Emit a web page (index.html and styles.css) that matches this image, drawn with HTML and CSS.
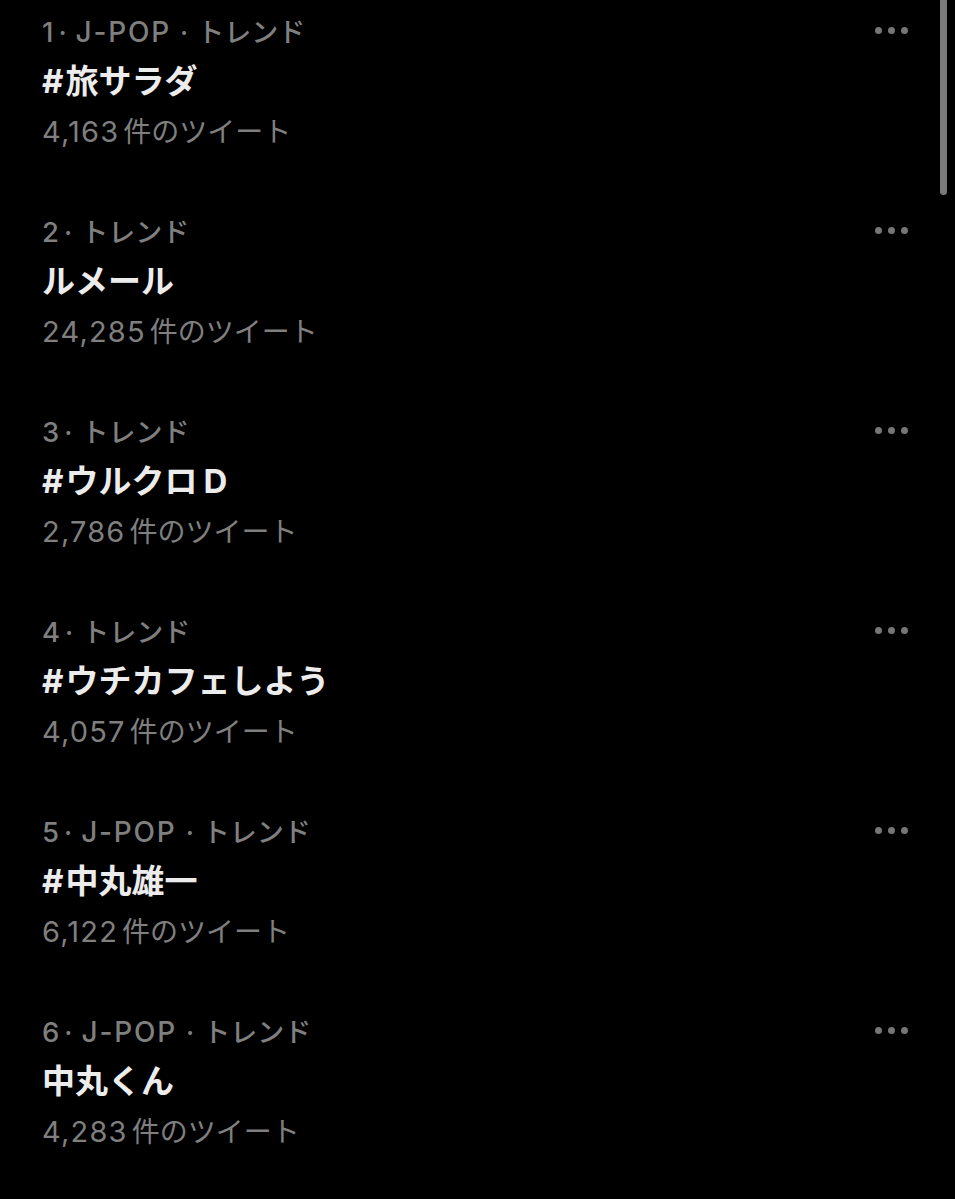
FILE: index.html
```html
<!DOCTYPE html>
<html lang="ja">
<head>
<meta charset="utf-8">
<link rel="stylesheet" href="styles.css">
</head>
<body>
<div class="page">
  <ul class="list">
    <li class="trend">
      <div class="text">
        <div class="meta"><span class="rank">1</span><span class="sep">·</span><span class="cat">J-POP</span><span class="sep">·</span><span>トレンド</span></div>
        <div class="title"><span class="hash">#</span>旅サラダ</div>
        <div class="count"><span class="num">4,163</span>件のツイート</div>
      </div>
      <div class="more"><span></span><span></span><span></span></div>
    </li>
    <li class="trend">
      <div class="text">
        <div class="meta"><span class="rank">2</span><span class="sep">·</span><span>トレンド</span></div>
        <div class="title">ルメール</div>
        <div class="count"><span class="num">24,285</span>件のツイート</div>
      </div>
      <div class="more"><span></span><span></span><span></span></div>
    </li>
    <li class="trend">
      <div class="text">
        <div class="meta"><span class="rank">3</span><span class="sep">·</span><span>トレンド</span></div>
        <div class="title"><span class="hash">#</span>ウルクロ<span class="lat">D</span></div>
        <div class="count"><span class="num">2,786</span>件のツイート</div>
      </div>
      <div class="more"><span></span><span></span><span></span></div>
    </li>
    <li class="trend">
      <div class="text">
        <div class="meta"><span class="rank">4</span><span class="sep">·</span><span>トレンド</span></div>
        <div class="title"><span class="hash">#</span>ウチカフェしよう</div>
        <div class="count"><span class="num">4,057</span>件のツイート</div>
      </div>
      <div class="more"><span></span><span></span><span></span></div>
    </li>
    <li class="trend">
      <div class="text">
        <div class="meta"><span class="rank">5</span><span class="sep">·</span><span class="cat">J-POP</span><span class="sep">·</span><span>トレンド</span></div>
        <div class="title"><span class="hash">#</span>中丸雄一</div>
        <div class="count"><span class="num">6,122</span>件のツイート</div>
      </div>
      <div class="more"><span></span><span></span><span></span></div>
    </li>
    <li class="trend">
      <div class="text">
        <div class="meta"><span class="rank">6</span><span class="sep">·</span><span class="cat">J-POP</span><span class="sep">·</span><span>トレンド</span></div>
        <div class="title">中丸くん</div>
        <div class="count"><span class="num">4,283</span>件のツイート</div>
      </div>
      <div class="more"><span></span><span></span><span></span></div>
    </li>
  </ul>
  <div class="scrollbar"></div>
</div>
</body>
</html>
```

FILE: styles.css
```css
html, body {
  margin: 0;
  padding: 0;
  background: #000;
}
body {
  font-family: Inter, "Noto Sans CJK JP", sans-serif;
  width: 955px;
  height: 1199px;
  overflow: hidden;
}
.page {
  position: relative;
  height: 1199px;
}
.list {
  list-style: none;
  margin: 0;
  padding: 0;
}
.trend {
  display: flex;
  justify-content: space-between;
  align-items: flex-start;
  height: 200px;
  padding: 14px 47px 0 42px;
  box-sizing: border-box;
}
.text {
  display: flex;
  flex-direction: column;
}
.meta {
  display: flex;
  align-items: baseline;
  color: #7f7f7f;
  font-size: 27px;
  line-height: 36px;
  font-weight: 500;
}
.meta .rank {
  font-size: 27.5px;
}
.meta .sep {
  margin: 0 9px 0 5px;
}
.meta .cat {
  font-size: 28px;
  letter-spacing: 1.8px;
  margin-right: 4px;
}
.title {
  color: #ececec;
  font-size: 33px;
  line-height: 48px;
  font-weight: 700;
  margin-top: 6px;
}
.title .hash {
  margin-right: 2px;
}
.title .lat {
  margin-left: 6px;
  letter-spacing: 1px;
}
.count {
  color: #7f7f7f;
  font-size: 28px;
  line-height: 36px;
  margin-top: 9px;
}
.count .num {
  font-size: 29px;
  letter-spacing: 1.2px;
  margin-right: 4px;
}
.more {
  display: flex;
  gap: 6px;
  margin-top: 13px;
}
.more span {
  width: 7px;
  height: 7px;
  border-radius: 50%;
  background: #767676;
}
.scrollbar {
  position: absolute;
  top: 0;
  right: 8px;
  width: 7px;
  height: 195px;
  border-radius: 0 0 4px 4px;
  background: #7a7a7a;
}
```
